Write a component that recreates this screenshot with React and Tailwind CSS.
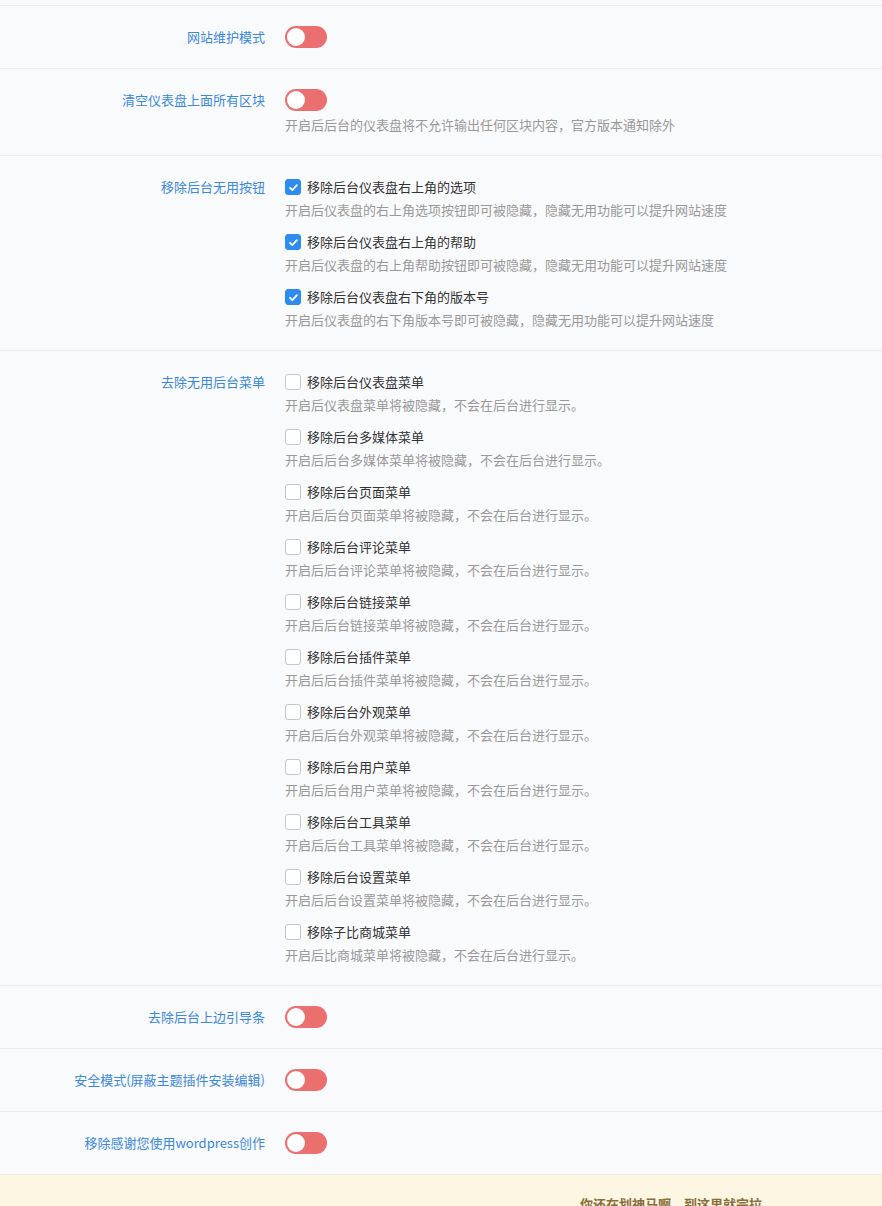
import React, { useState } from "react";

const font = { fontFamily: '"Noto Sans CJK SC", "Noto Sans", sans-serif' };

function Toggle({ on, onClick }) {
  return (
    <button
      onClick={onClick}
      className={`relative block h-[22px] w-[42px] rounded-full ${on ? "bg-[#3a8ee6]" : "bg-[#ec6f6f]"}`}
    >
      <span
        className={`absolute top-[2px] h-[18px] w-[18px] rounded-full bg-white ${on ? "left-[22px]" : "left-[2px]"}`}
      />
    </button>
  );
}

function Check({ checked, onClick }) {
  return (
    <span
      onClick={onClick}
      className={`flex h-4 w-4 items-center justify-center rounded-[3px] border ${
        checked ? "border-[#2d8cf0] bg-[#2d8cf0]" : "border-[#c4c7cc] bg-white"
      }`}
    >
      {checked && (
        <svg width="11" height="11" viewBox="0 0 12 12" fill="none">
          <path d="M2.2 6.3l2.5 2.5 5-5.4" stroke="white" strokeWidth="2" strokeLinecap="round" strokeLinejoin="round" />
        </svg>
      )}
    </span>
  );
}

function Row({ label, children }) {
  return (
    <div className="grid grid-cols-[265px_1fr] gap-x-5 border-t border-[#e9ebef] pt-5 pb-5">
      <div className="text-right text-[13px] leading-[22px] text-[#3a87e0]">{label}</div>
      <div>{children}</div>
    </div>
  );
}

function CheckItem({ title, desc, checked, onClick }) {
  return (
    <div className="mb-[11px] last:mb-0">
      <label className="flex h-[22px] cursor-pointer items-center gap-[6px] text-[13px] text-[#333]">
        <Check checked={checked} onClick={onClick} />
        <span>{title}</span>
      </label>
      <div className="mt-[2px] text-[13px] leading-5 text-[#999]">{desc}</div>
    </div>
  );
}

const topChecks = [
  ["移除后台仪表盘右上角的选项", "开启后仪表盘的右上角选项按钮即可被隐藏，隐藏无用功能可以提升网站速度"],
  ["移除后台仪表盘右上角的帮助", "开启后仪表盘的右上角帮助按钮即可被隐藏，隐藏无用功能可以提升网站速度"],
  ["移除后台仪表盘右下角的版本号", "开启后仪表盘的右下角版本号即可被隐藏，隐藏无用功能可以提升网站速度"],
];

const menus = [
  ["移除后台仪表盘菜单", "开启后仪表盘菜单将被隐藏，不会在后台进行显示。"],
  ["移除后台多媒体菜单", "开启后后台多媒体菜单将被隐藏，不会在后台进行显示。"],
  ["移除后台页面菜单", "开启后后台页面菜单将被隐藏，不会在后台进行显示。"],
  ["移除后台评论菜单", "开启后后台评论菜单将被隐藏，不会在后台进行显示。"],
  ["移除后台链接菜单", "开启后后台链接菜单将被隐藏，不会在后台进行显示。"],
  ["移除后台插件菜单", "开启后后台插件菜单将被隐藏，不会在后台进行显示。"],
  ["移除后台外观菜单", "开启后后台外观菜单将被隐藏，不会在后台进行显示。"],
  ["移除后台用户菜单", "开启后后台用户菜单将被隐藏，不会在后台进行显示。"],
  ["移除后台工具菜单", "开启后后台工具菜单将被隐藏，不会在后台进行显示。"],
  ["移除后台设置菜单", "开启后后台设置菜单将被隐藏，不会在后台进行显示。"],
  ["移除子比商城菜单", "开启后比商城菜单将被隐藏，不会在后台进行显示。"],
];

export default function App() {
  const [toggles, setToggles] = useState({});
  const [checks, setChecks] = useState({ t0: true, t1: true, t2: true });

  const flip = k => setToggles(p => ({ ...p, [k]: !p[k] }));
  const tick = k => setChecks(p => ({ ...p, [k]: !p[k] }));

  return (
    <div className="min-h-[1206px] bg-[#f9fafc]" style={font}>
      <div className="h-[5px]" />
      <Row label="网站维护模式">
        <Toggle on={toggles.a} onClick={() => flip("a")} />
      </Row>
      <Row label="清空仪表盘上面所有区块">
        <Toggle on={toggles.b} onClick={() => flip("b")} />
        <div className="mt-1 text-[13px] leading-5 text-[#999]">开启后后台的仪表盘将不允许输出任何区块内容，官方版本通知除外</div>
      </Row>
      <Row label="移除后台无用按钮">
        {topChecks.map(([t, d], i) => (
          <CheckItem key={t} title={t} desc={d} checked={checks["t" + i]} onClick={() => tick("t" + i)} />
        ))}
      </Row>
      <Row label="去除无用后台菜单">
        {menus.map(([t, d], i) => (
          <CheckItem key={t} title={t} desc={d} checked={checks["m" + i]} onClick={() => tick("m" + i)} />
        ))}
      </Row>
      <Row label="去除后台上边引导条">
        <Toggle on={toggles.c} onClick={() => flip("c")} />
      </Row>
      <Row label="安全模式(屏蔽主题插件安装编辑)">
        <Toggle on={toggles.d} onClick={() => flip("d")} />
      </Row>
      <Row label="移除感谢您使用wordpress创作">
        <Toggle on={toggles.e} onClick={() => flip("e")} />
      </Row>
      <div className="border-t border-[#e9ebef] bg-[#fcf6e3] pt-[19px] pb-6 pl-[580px] text-[13px] font-bold text-[#8a6d3b]">
        你还在划神马啊，到这里就完拉
      </div>
    </div>
  );
}
